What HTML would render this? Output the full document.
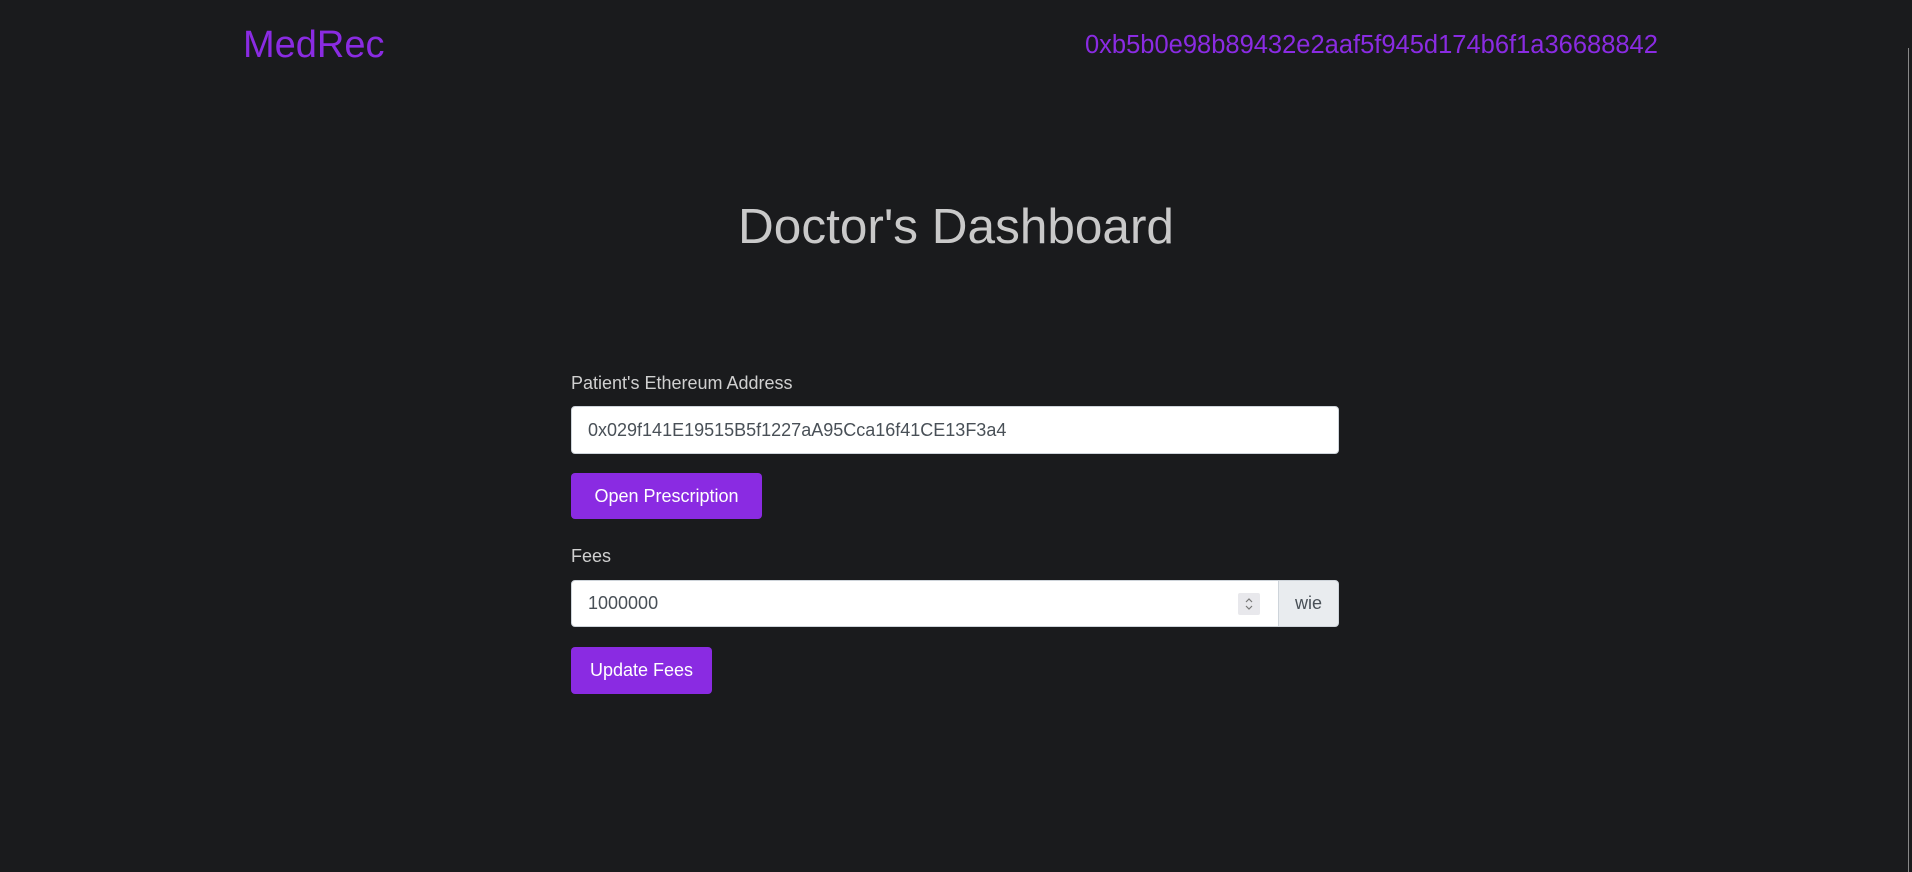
<!DOCTYPE html>
<html><head><style>
html,body{margin:0;padding:0;width:1912px;height:872px;background:#1a1b1d;overflow:hidden;font-family:"Liberation Sans",sans-serif;}
.a{position:absolute;white-space:nowrap;}
.logo{left:243px;top:24px;font-size:38px;color:#8a2be2;}
.addr{left:1085px;top:31px;font-size:25.5px;color:#8a2be2;}
.title{left:0;width:1912px;text-align:center;top:198px;font-size:49.5px;color:#c9c9c9;}
.lbl{font-size:18px;color:#d0d0d0;left:571px;}
.inp{left:571px;background:#fff;border:1px solid #ced4da;border-radius:4px;box-sizing:border-box;font-size:18px;color:#495057;padding-left:16px;display:flex;align-items:center;}
.btn{left:571px;background:#8a2be2;color:#fff;border-radius:4px;font-size:18px;display:flex;align-items:center;justify-content:center;}
.wie{left:1278px;top:580px;width:61px;height:47px;background:#e9ecef;border:1px solid #ced4da;border-radius:0 4px 4px 0;box-sizing:border-box;font-size:18px;color:#495057;display:flex;align-items:center;justify-content:center;}
.spin{left:1238px;top:593px;width:22px;height:22px;background:#e8e8ec;border-radius:2px;}
.sb{left:1908px;top:48px;width:1px;height:824px;background:#888;}
</style></head><body>
<div class="a logo">MedRec</div>
<div class="a addr">0xb5b0e98b89432e2aaf5f945d174b6f1a36688842</div>
<div class="a title">Doctor's Dashboard</div>
<div class="a lbl" style="top:373px">Patient's Ethereum Address</div>
<div class="a inp" style="top:406px;width:768px;height:48px">0x029f141E19515B5f1227aA95Cca16f41CE13F3a4</div>
<div class="a btn" style="top:473px;width:191px;height:46px">Open Prescription</div>
<div class="a lbl" style="top:546px">Fees</div>
<div class="a inp" style="top:580px;width:708px;height:47px;border-radius:4px 0 0 4px">1000000</div>
<div class="a spin"><svg width="22" height="22" viewBox="0 0 22 22"><path d="M8 9l3-3 3 3M8 13l3 3 3-3" stroke="#777" stroke-width="1.2" fill="none"/></svg></div>
<div class="a wie">wie</div>
<div class="a btn" style="top:647px;width:141px;height:47px">Update Fees</div>
<div class="a sb"></div>
</body></html>
